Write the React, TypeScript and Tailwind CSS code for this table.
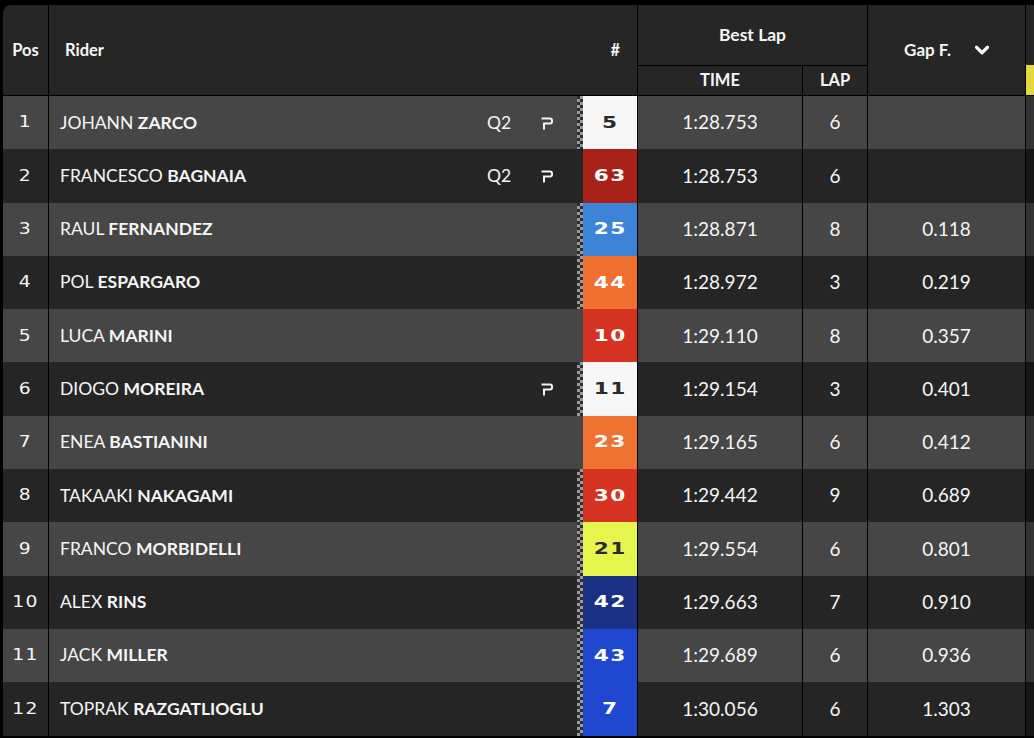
import { ChevronDown } from "lucide-react";

interface Row {
  pos: number;
  first: string;
  last: string;
  num: string;
  badge: string;
  badgeText: string;
  q2?: boolean;
  pit?: boolean;
  checker: boolean;
  time: string;
  lap: number;
  gap: string;
}

const rows: Row[] = [
  { pos: 1, first: "JOHANN", last: "ZARCO", num: "5", badge: "bg-[#f7f7f7]", badgeText: "text-[#2a2a2a]", q2: true, pit: true, checker: true, time: "1:28.753", lap: 6, gap: "" },
  { pos: 2, first: "FRANCESCO", last: "BAGNAIA", num: "63", badge: "bg-[#a82118]", badgeText: "text-white", q2: true, pit: true, checker: false, time: "1:28.753", lap: 6, gap: "" },
  { pos: 3, first: "RAUL", last: "FERNANDEZ", num: "25", badge: "bg-[#3d84d8]", badgeText: "text-white", checker: true, time: "1:28.871", lap: 8, gap: "0.118" },
  { pos: 4, first: "POL", last: "ESPARGARO", num: "44", badge: "bg-[#ef7030]", badgeText: "text-white", checker: true, time: "1:28.972", lap: 3, gap: "0.219" },
  { pos: 5, first: "LUCA", last: "MARINI", num: "10", badge: "bg-[#d63221]", badgeText: "text-white", checker: false, time: "1:29.110", lap: 8, gap: "0.357" },
  { pos: 6, first: "DIOGO", last: "MOREIRA", num: "11", badge: "bg-[#f7f7f7]", badgeText: "text-[#2a2a2a]", pit: true, checker: true, time: "1:29.154", lap: 3, gap: "0.401" },
  { pos: 7, first: "ENEA", last: "BASTIANINI", num: "23", badge: "bg-[#ee7232]", badgeText: "text-white", checker: false, time: "1:29.165", lap: 6, gap: "0.412" },
  { pos: 8, first: "TAKAAKI", last: "NAKAGAMI", num: "30", badge: "bg-[#d63221]", badgeText: "text-white", checker: true, time: "1:29.442", lap: 9, gap: "0.689" },
  { pos: 9, first: "FRANCO", last: "MORBIDELLI", num: "21", badge: "bg-[#e6f54e]", badgeText: "text-[#2a2a2a]", checker: true, time: "1:29.554", lap: 6, gap: "0.801" },
  { pos: 10, first: "ALEX", last: "RINS", num: "42", badge: "bg-[#1b2f85]", badgeText: "text-white", checker: true, time: "1:29.663", lap: 7, gap: "0.910" },
  { pos: 11, first: "JACK", last: "MILLER", num: "43", badge: "bg-[#1f48cf]", badgeText: "text-white", checker: true, time: "1:29.689", lap: 6, gap: "0.936" },
  { pos: 12, first: "TOPRAK", last: "RAZGATLIOGLU", num: "7", badge: "bg-[#1f48cf]", badgeText: "text-white", checker: true, time: "1:30.056", lap: 6, gap: "1.303" },
];

// stylised "P" used for pit marker
function PitIcon() {
  return (
    <svg width="13" height="14" viewBox="0 0 13 14" fill="none">
      <path d="M1.5 2.5 H9 Q11 2.5 11 4.5 V5.5 Q11 7.5 9 7.5 H3 V12.5" stroke="#f5f5f5" strokeWidth="2" strokeLinecap="square" />
    </svg>
  );
}

export default function App() {
  return (
    <div
      className="w-[1034px] h-[738px] overflow-hidden bg-black pt-[5px] pl-[3px] text-[#f5f5f5]"
      style={{ fontFamily: "Lato, 'Open Sans', sans-serif" }}
    >
      <div className="w-[1100px] rounded-tl-lg overflow-hidden">
        {/* header */}
        <div className="flex h-[91px] bg-[#262626] border-b border-black">
          <div className="w-[46px] shrink-0 border-r border-black flex items-center justify-center text-[16.5px] font-bold">
            Pos
          </div>
          <div className="w-[589px] shrink-0 border-r border-black flex items-center text-[16.5px] font-bold">
            <span className="pl-[16px]">Rider</span>
            <span className="ml-auto mr-[17px]">#</span>
          </div>
          <div className="w-[230px] shrink-0 flex flex-col">
            <div className="h-[61px] border-b border-r border-black flex items-center justify-center text-[17.5px] font-bold">
              Best Lap
            </div>
            <div className="flex flex-1">
              <div className="w-[165px] border-r border-black flex items-center justify-center text-[16.5px] font-bold">
                TIME
              </div>
              <div className="w-[65px] border-r border-black flex items-center justify-center text-[16.5px] font-bold">
                LAP
              </div>
            </div>
          </div>
          <div className="w-[158px] shrink-0 border-r border-black flex items-center justify-end gap-[20px] pr-[32px] text-[17px] font-bold">
            Gap F.
            <ChevronDown size={22} strokeWidth={3.5} />
          </div>
          <div className="w-[20px] shrink-0 flex flex-col">
            <div className="h-[60px]" />
            <div className="flex-1 bg-[#e3da3c]" />
          </div>
        </div>

        {/* rows */}
        {rows.map((r) => {
          const odd = r.pos % 2 === 1;
          return (
            <div key={r.pos} className={`flex h-[53.3px] ${odd ? "bg-[#464646]" : "bg-[#252525]"}`}>
              <div
                className="w-[46px] shrink-0 border-r border-black flex items-center justify-center text-[15px] tracking-[1px]"
                style={{ fontFamily: "'DejaVu Sans', sans-serif" }}
              >
                <span className="inline-block scale-x-125">{r.pos}</span>
              </div>
              <div className="w-[528px] shrink-0 flex items-center pl-[11px] text-[17.5px]">
                <span>
                  {r.first} <span className="font-bold">{r.last}</span>
                </span>
                <div className="ml-auto flex items-center">
                  <span className="w-[28px] text-[17.5px]">{r.q2 ? "Q2" : ""}</span>
                  <span className="w-[13px] ml-[26px] mr-[23px] flex items-center">{r.pit ? <PitIcon /> : null}</span>
                </div>
              </div>
              <div
                className={`w-[6px] shrink-0 ${
                  r.checker
                    ? "bg-[image:repeating-conic-gradient(#9a9a9a_0%_25%,#2e2e2e_0%_50%)] bg-size-[6px_6px]"
                    : ""
                }`}
              />
              <div
                className={`w-[55px] shrink-0 border-r border-black flex items-center justify-center ${r.badge} ${r.badgeText} text-[16px] font-bold`}
                style={{ fontFamily: "'DejaVu Sans', sans-serif" }}
              >
                <span className="inline-block scale-x-[1.35] tracking-[1px]">{r.num}</span>
              </div>
              <div className="w-[165px] shrink-0 border-r border-black flex items-center justify-center text-[19px]">
                {r.time}
              </div>
              <div className="w-[65px] shrink-0 border-r border-black flex items-center justify-center text-[19px]">
                {r.lap}
              </div>
              <div className="w-[158px] shrink-0 border-r border-black flex items-center justify-center text-[19px]">
                {r.gap}
              </div>
              <div className={`w-[20px] shrink-0 ${odd ? "bg-[#333333]" : "bg-[#161616]"}`} />
            </div>
          );
        })}
      </div>
    </div>
  );
}
